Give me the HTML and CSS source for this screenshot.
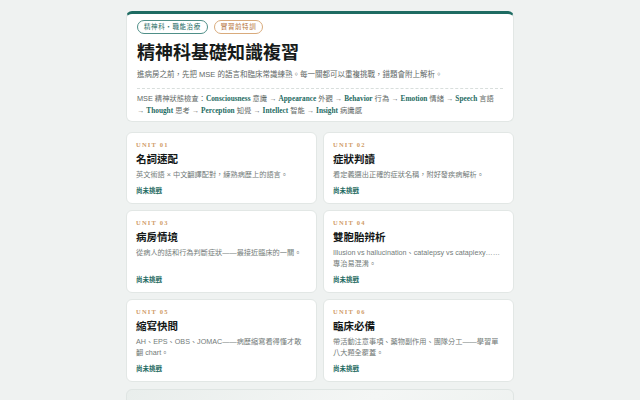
FILE: index.html
```html
<!DOCTYPE html>
<html lang="zh-Hant">
<head>
<meta charset="utf-8">
<link rel="stylesheet" href="styles.css">
</head>
<body>
<div class="wrap">
  <header class="hero">
    <div class="pills">
      <span class="pill pill-teal">精神科・職能治療</span>
      <span class="pill pill-gold">實習前特訓</span>
    </div>
    <h1 class="title">精神科基礎知識複習</h1>
    <p class="sub">進病房之前，先把 MSE 的語言和臨床常識練熟。每一關都可以重複挑戰，錯題會附上解析。</p>
    <p class="mse">MSE 精神狀態檢查：<b>Consciousness</b> 意識 → <b>Appearance</b> 外觀 → <b>Behavior</b> 行為 → <b>Emotion</b> 情緒 → <b>Speech</b> 言語 → <b>Thought</b> 思考 → <b>Perception</b> 知覺 → <b>Intellect</b> 智能 → <b>Insight</b> 病識感</p>
  </header>

  <main class="grid">
    <article class="card">
      <div class="unit">UNIT 01</div>
      <h2 class="card-title">名詞速配</h2>
      <p class="desc">英文術語 × 中文翻譯配對，練熟病歷上的語言。</p>
      <div class="status">尚未挑戰</div>
    </article>
    <article class="card">
      <div class="unit">UNIT 02</div>
      <h2 class="card-title">症狀判讀</h2>
      <p class="desc">看定義選出正確的症狀名稱，附好發疾病解析。</p>
      <div class="status">尚未挑戰</div>
    </article>
    <article class="card">
      <div class="unit">UNIT 03</div>
      <h2 class="card-title">病房情境</h2>
      <p class="desc">從病人的話和行為判斷症狀——最接近臨床的一關。</p>
      <div class="status">尚未挑戰</div>
    </article>
    <article class="card">
      <div class="unit">UNIT 04</div>
      <h2 class="card-title">雙胞胎辨析</h2>
      <p class="desc">Illusion vs hallucination、catalepsy vs cataplexy……專治易混淆。</p>
      <div class="status">尚未挑戰</div>
    </article>
    <article class="card">
      <div class="unit">UNIT 05</div>
      <h2 class="card-title">縮寫快問</h2>
      <p class="desc">AH、EPS、OBS、JOMAC——病歷縮寫看得懂才敢翻 chart。</p>
      <div class="status">尚未挑戰</div>
    </article>
    <article class="card">
      <div class="unit">UNIT 06</div>
      <h2 class="card-title">臨床必備</h2>
      <p class="desc">帶活動注意事項、藥物副作用、團隊分工——學習單八大題全覆蓋。</p>
      <div class="status">尚未挑戰</div>
    </article>
  </main>

  <section class="handbook">
    <div class="unit">HANDBOOK</div>
  </section>
</div>
</body>
</html>
```

FILE: styles.css
```css
* { box-sizing: border-box; }
html, body { margin: 0; padding: 0; }
body {
  background: #eff2f1;
  font-family: "Liberation Sans", "Noto Sans CJK TC", sans-serif;
  color: #1c2220;
}
.wrap {
  width: 388px;
  margin: 0 auto;
  padding-top: 11px;
}
.hero {
  background: #fff;
  border: 1px solid #e2e7e5;
  border-top: 3px solid #1e6b62;
  border-radius: 6px;
  padding: 6px 10px 4px 10px;
}
.pills { display: flex; gap: 6px; }
.pill {
  font-size: 6.5px;
  line-height: 12px;
  padding: 0 6px;
  border-radius: 8px;
  letter-spacing: 0.6px;
  border: 1px solid;
}
.pill-teal { color: #1e6b62; border-color: #4f8f88; }
.pill-gold { color: #b5733a; border-color: #d9ab7c; }
.title {
  margin: 6px 0 0 0;
  font-size: 18px;
  line-height: 26px;
  font-weight: 700;
  color: #171b1a;
}
.sub {
  margin: 3px 0 0 0;
  font-size: 7.5px;
  line-height: 12px;
  color: #5f6866;
  padding-bottom: 7px;
  border-bottom: 1px dashed #d8dedc;
}
.mse {
  margin: 4px 0 0 0;
  font-size: 7.3px;
  line-height: 12px;
  color: #5f6866;
}
.mse b {
  font-family: "Liberation Serif", "DejaVu Serif", serif;
  color: #1e6b62;
  font-weight: 700;
}
.grid {
  margin-top: 10px;
  display: grid;
  grid-template-columns: 1fr 1fr;
  gap: 6px;
}
.card {
  background: #fff;
  border: 1px solid #e2e7e5;
  border-radius: 6px;
  padding: 7px 9px 7px 9px;
  display: flex;
  flex-direction: column;
}
.unit {
  font-family: "Liberation Serif", "DejaVu Serif", serif;
  font-size: 6.5px;
  letter-spacing: 1.2px;
  line-height: 10px;
  color: #cf9b67;
  font-weight: 700;
}
.card-title {
  margin: 1px 0 0 0;
  font-size: 10.5px;
  line-height: 16px;
  font-weight: 700;
  color: #141817;
}
.desc {
  margin: 2px 0 0 0;
  font-size: 7.2px;
  line-height: 11px;
  color: #737b79;
}
.status {
  margin-top: auto;
  padding-top: 6px;
  font-size: 6.5px;
  line-height: 10px;
  font-weight: 700;
  color: #1e6b62;
}
.handbook {
  margin-top: 7px;
  height: 40px;
  border: 1px solid #dfe5e3;
  border-radius: 6px;
  background: linear-gradient(135deg, #e9eeec, #f4f6f5 60%, #eef2f0);
  padding: 7px 9px;
}
```
